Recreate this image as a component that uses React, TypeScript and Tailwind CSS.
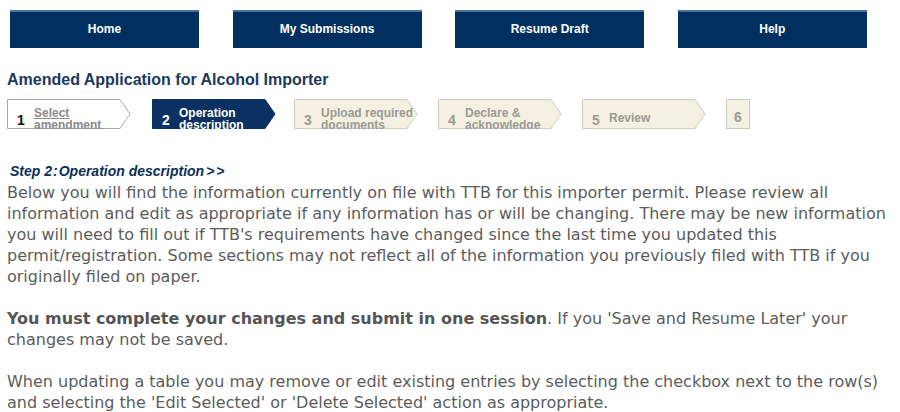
import React from "react";

type StepState = "done" | "current" | "todo";

interface Step {
  num: number;
  label: string[];
  state: StepState;
  left: number;
}

const steps: Step[] = [
  { num: 1, label: ["Select", "amendment"], state: "done", left: 7 },
  { num: 2, label: ["Operation", "description"], state: "current", left: 21 },
  { num: 3, label: ["Upload required", "documents"], state: "todo", left: 18 },
  { num: 4, label: ["Declare &", "acknowledge"], state: "todo", left: 20 },
  { num: 5, label: ["Review"], state: "todo", left: 20 },
];

const navItems = ["Home", "My Submissions", "Resume Draft", "Help"];

function StepChevron({ step }: { step: Step }) {
  const fill = step.state === "current" ? "#0a3161" : step.state === "done" ? "#ffffff" : "#f4f1e2";
  const stroke = step.state === "current" ? "#0a3161" : step.state === "done" ? "#a8a8a8" : "#cfcdc0";
  const numColor = step.state === "current" ? "text-white" : step.state === "done" ? "text-[#111]" : "text-[#9a9a96]";
  const textColor = step.state === "current" ? "text-white" : step.state === "done" ? "text-[#8a8a8a] underline" : "text-[#9a9a96]";

  return (
    <div className="relative h-[30px] w-[124px] shrink-0" style={{ marginLeft: step.left }}>
      <svg className="absolute inset-0" width="124" height="30" viewBox="0 0 124 30">
        <polygon points="0.5,0.5 113,0.5 123,15 113,29.5 0.5,29.5" fill={fill} stroke={stroke} strokeWidth="1" />
      </svg>
      <div className="relative flex h-full overflow-hidden pl-[10px]">
        <span className={`mt-[14px] w-[17px] text-[14px] leading-[14px] font-bold ${numColor}`}>{step.num}</span>
        {step.label.length === 1 ? (
          <span className={`mt-[13px] text-[12px] leading-[12px] font-bold ${textColor}`}>{step.label[0]}</span>
        ) : (
          <span className={`mt-[8px] flex flex-col text-[12px] leading-[12px] font-bold ${textColor}`}>
            <span>{step.label[0]}</span>
            <span>{step.label[1]}</span>
          </span>
        )}
      </div>
    </div>
  );
}

export default function App() {
  return (
    <div className="h-[412px] w-[900px] overflow-hidden bg-white" style={{ fontFamily: '"Liberation Sans", Arial, sans-serif' }}>
      {/* Top nav */}
      <div className="flex gap-[33.6px] pl-[10px] pt-[10px]">
        {navItems.map((item) => (
          <div
            key={item}
            className="flex h-[38px] w-[189px] items-center justify-center border-t-2 border-[#4a73a0] bg-[#002f60] pb-[3px] text-[12px] font-bold text-white"
          >
            {item}
          </div>
        ))}
      </div>

      {/* Title */}
      <h1 className="mt-[23px] pl-[7px] text-[16px] leading-[18px] font-bold text-[#1b3a5d]">
        Amended Application for Alcohol Importer
      </h1>

      {/* Step bar */}
      <div className="mt-[10px] flex">
        {steps.map((s) => (
          <StepChevron key={s.num} step={s} />
        ))}
        <div className="ml-[20px] flex h-[30px] w-[24px] items-center justify-center border border-[#cfcdc0] bg-[#f4f1e2] pt-[6px] text-[14px] font-bold text-[#9a9a96]">
          6
        </div>
      </div>

      {/* Step heading */}
      <div className="mt-[34px] pl-[10px] text-[14px] leading-[16px] font-bold italic text-[#0d2f5a]">
        Step 2<span className="mx-[1px]">:</span>Operation description<span className="ml-[2px] tracking-[2px]">&gt;&gt;</span>
      </div>

      {/* Body */}
      <div
        className="mt-[3px] pl-[7px] text-[16px] leading-[21px] whitespace-nowrap text-[#5c5c5c]"
        style={{ fontFamily: '"DejaVu Sans", Verdana, sans-serif' }}
      >
        <p>
          Below you will find the information currently on file with TTB for this importer permit. Please review all
          <br />
          information and edit as appropriate if any information has or will be changing. There may be new information
          <br />
          you will need to fill out if TTB's requirements have changed since the last time you updated this
          <br />
          permit/registration. Some sections may not reflect all of the information you previously filed with TTB if you
          <br />
          originally filed on paper.
        </p>
        <p className="mt-[21px]">
          <strong className="font-bold text-[#555]">You must complete your changes and submit in one session</strong>. If you 'Save and Resume Later' your
          <br />
          changes may not be saved.
        </p>
        <p className="mt-[21px]">
          When updating a table you may remove or edit existing entries by selecting the checkbox next to the row(s)
          <br />
          and selecting the 'Edit Selected' or 'Delete Selected' action as appropriate.
        </p>
      </div>
    </div>
  );
}
